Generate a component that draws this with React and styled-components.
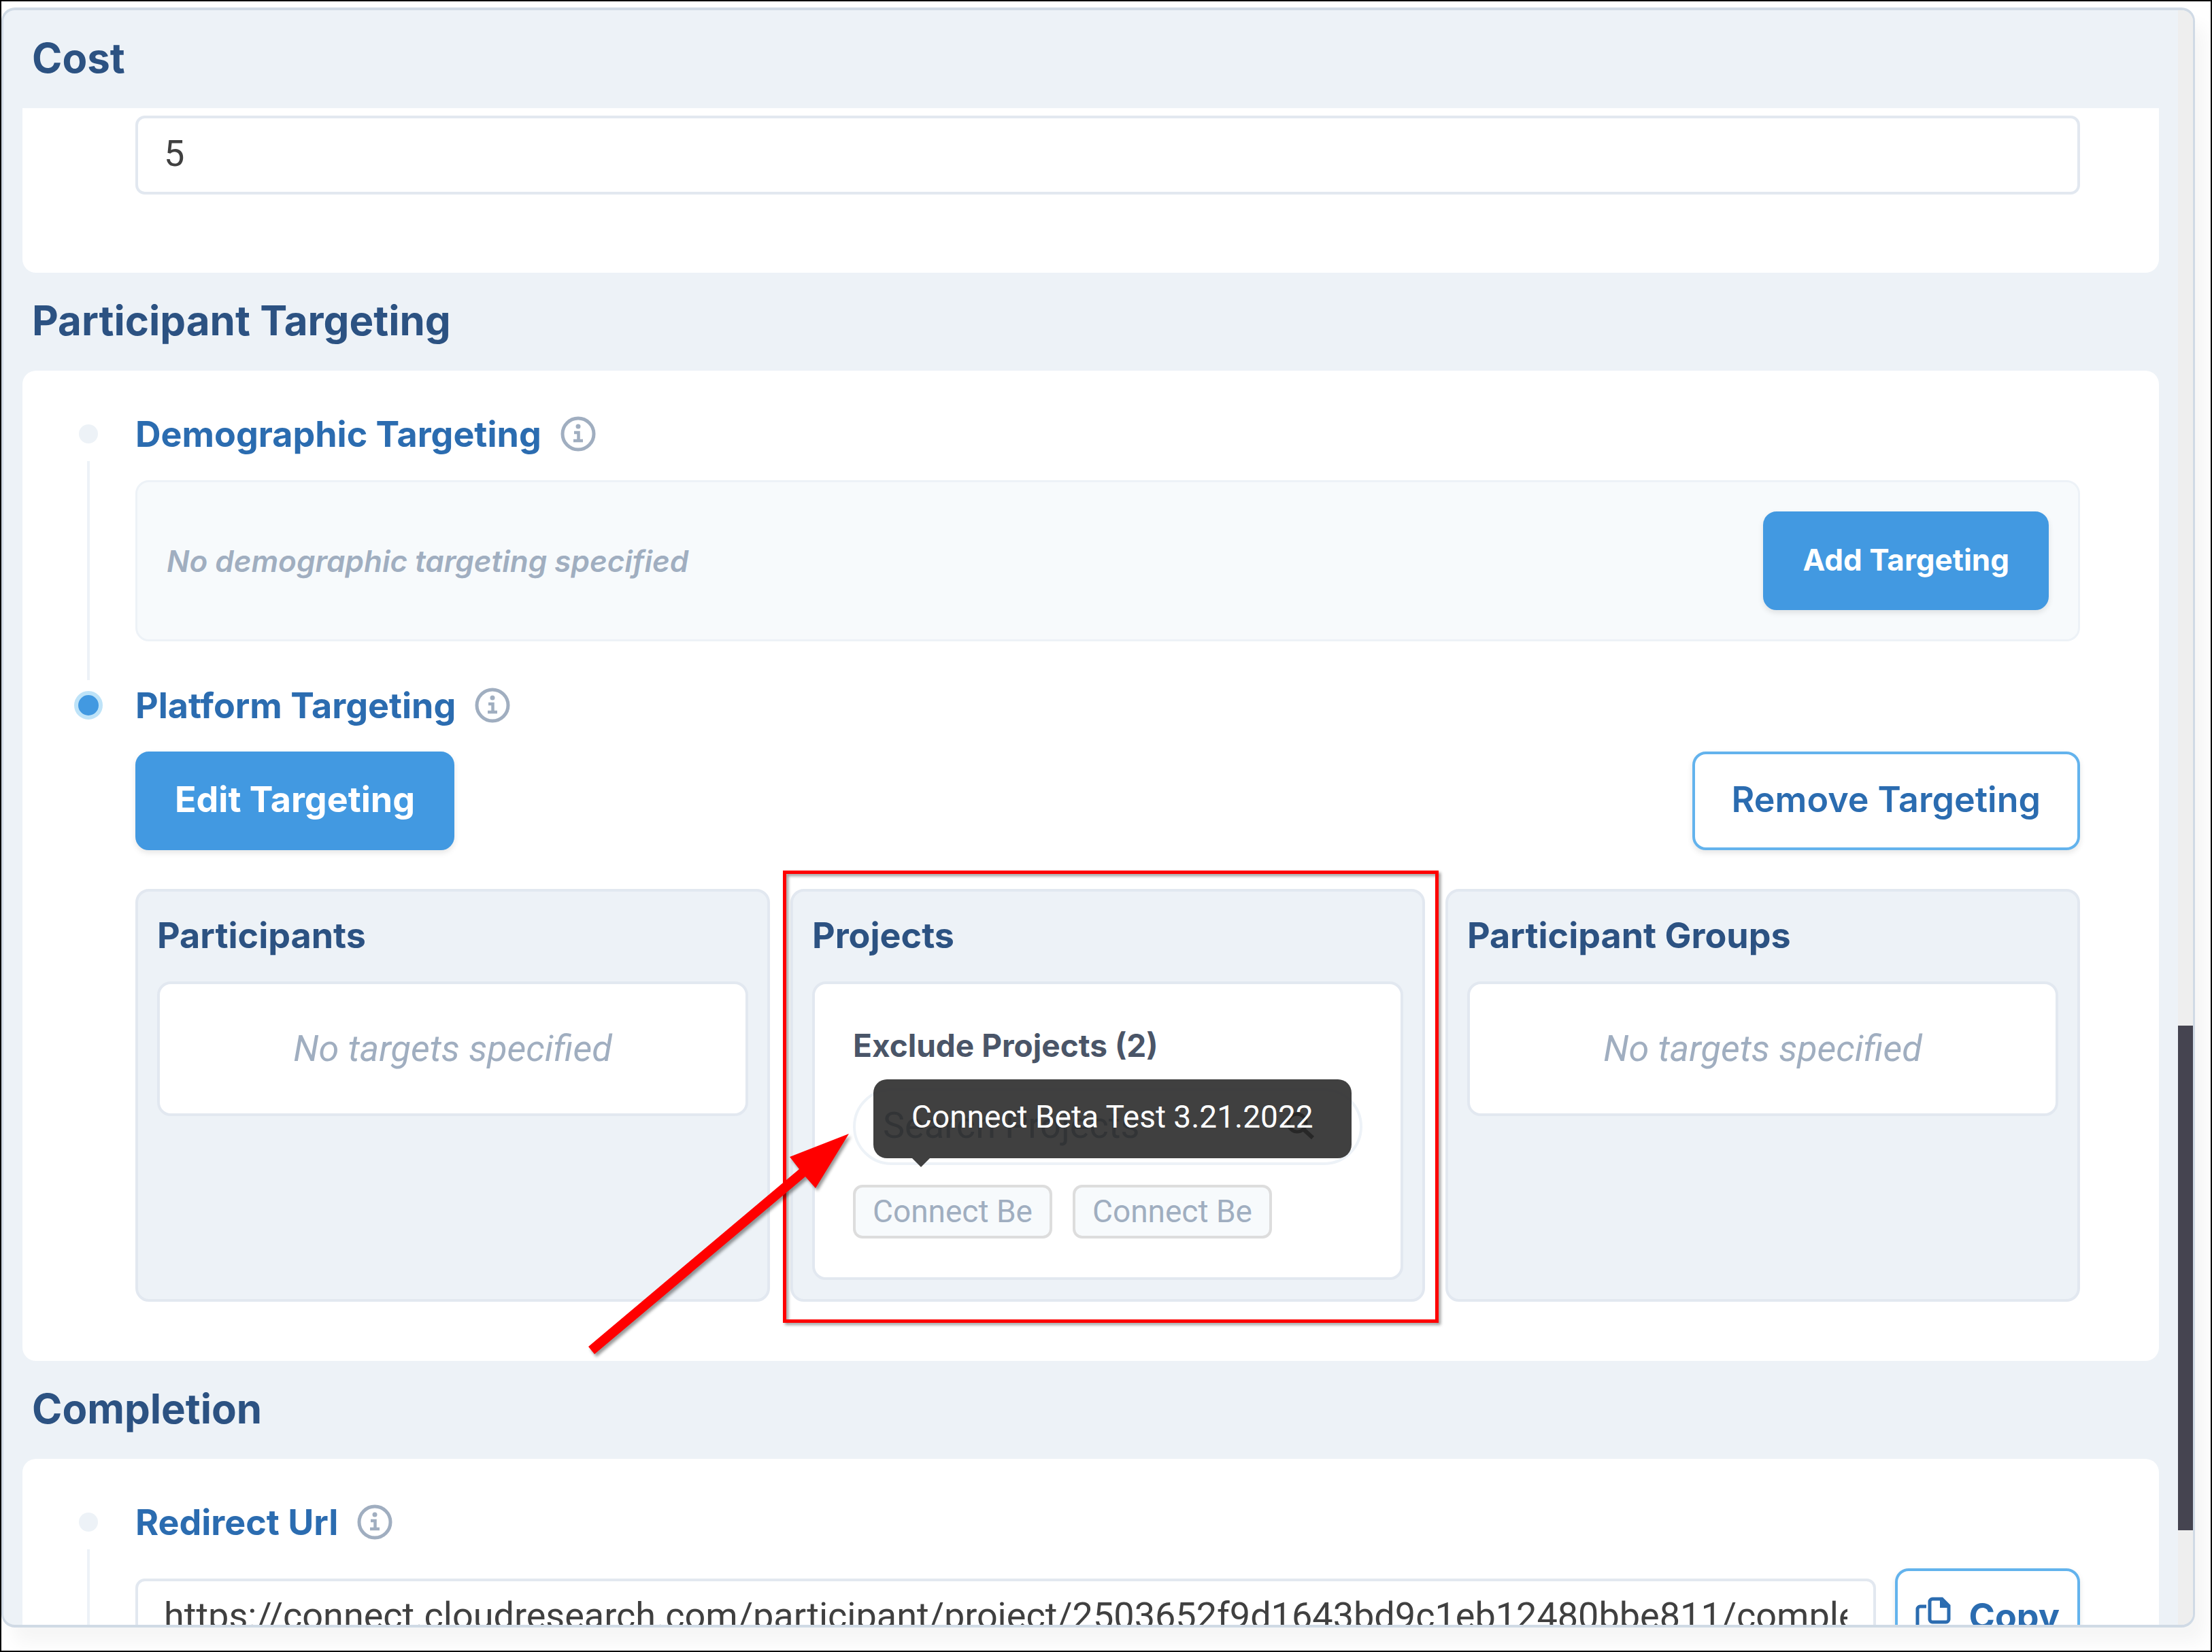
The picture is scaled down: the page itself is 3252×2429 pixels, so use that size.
import React from "react";
import styled, { createGlobalStyle, css } from "styled-components";

const App = () => {
  return (
    <Frame>
      <GlobalStyle />
      <Panel>
        <Content>
          <SectionTitle>Cost</SectionTitle>
          <CostCard>
            <TextInput aria-label="Cost" defaultValue="5" />
          </CostCard>

          <SectionTitle>Participant Targeting</SectionTitle>
          <Card>
            <Step>
              <Rail line />
              <StepBody>
                <StepHeading label="Demographic Targeting" />
                <EmptyBar>
                  <EmptyBarText>No demographic targeting specified</EmptyBarText>
                  <Button small>Add Targeting</Button>
                </EmptyBar>
              </StepBody>
            </Step>
            <Step last>
              <Rail active />
              <StepBody>
                <StepHeading label="Platform Targeting" />
                <ButtonRow>
                  <Button>Edit Targeting</Button>
                  <Button outline>Remove Targeting</Button>
                </ButtonRow>
                <Columns>
                  <Column>
                    <ColumnTitle>Participants</ColumnTitle>
                    <EmptyBox>No targets specified</EmptyBox>
                  </Column>
                  <Column>
                    <ColumnTitle>Projects</ColumnTitle>
                    <ProjectBox>
                      <ProjectTitle>Exclude Projects (2)</ProjectTitle>
                      <Search>
                        <SearchInput
                          type="text"
                          aria-label="Search Projects"
                          placeholder="Search Projects"
                        />
                        <SearchIcon />
                      </Search>
                      <Chips>
                        <Chip>
                          Connect Be
                          <Tooltip role="tooltip">
                            Connect Beta Test 3.21.2022
                          </Tooltip>
                        </Chip>
                        <Chip>Connect Be</Chip>
                      </Chips>
                    </ProjectBox>
                    <Highlight />
                    <Arrow />
                  </Column>
                  <Column>
                    <ColumnTitle>Participant Groups</ColumnTitle>
                    <EmptyBox>No targets specified</EmptyBox>
                  </Column>
                </Columns>
              </StepBody>
            </Step>
          </Card>

          <SectionTitle>Completion</SectionTitle>
          <Card>
            <Step>
              <Rail line />
              <StepBody>
                <StepHeading label="Redirect Url" />
                <UrlRow>
                  <TextInput
                    aria-label="Redirect Url"
                    readOnly
                    value="https://connect.cloudresearch.com/participant/project/2503652f9d1643bd9c1eb12480bbe811/complete"
                  />
                  <Button outline compact>
                    <CopyIcon />
                    Copy
                  </Button>
                </UrlRow>
              </StepBody>
            </Step>
          </Card>
        </Content>
        <ScrollTrack>
          <ScrollThumb />
        </ScrollTrack>
      </Panel>
    </Frame>
  );
};

const Rail = ({ active, line }) => (
  <RailColumn>
    <DotCell>
      <Dot $active={active} />
    </DotCell>
    {line ? <RailLine /> : ""}
  </RailColumn>
);

const StepHeading = ({ label }) => (
  <StepTitle>
    {label}
    <InfoIcon />
  </StepTitle>
);

const Step = ({ last, children }) => <StepRow $last={last}>{children}</StepRow>;

const Button = ({ small, outline, compact, children }) => (
  <Btn type="button" $small={small} $outline={outline} $compact={compact}>
    {children}
  </Btn>
);

const InfoIcon = () => (
  <svg width="52" height="52" viewBox="0 0 52 52" fill="none" aria-hidden="true">
    <circle cx="26" cy="26" r="23" stroke="#a0aec0" strokeWidth="5" />
    <circle cx="26" cy="15" r="3.5" fill="#a0aec0" />
    <path d="M20 24h6.500v12M19 36h14" stroke="#a0aec0" strokeWidth="4.500" />
  </svg>
);

const SearchIcon = () => (
  <svg width="44" height="44" viewBox="0 0 44 44" fill="none" aria-hidden="true">
    <circle cx="18" cy="18" r="13" stroke="#000" strokeWidth="5" />
    <path d="M28 28l13 12" stroke="#000" strokeWidth="6" />
  </svg>
);

const CopyIcon = () => (
  <svg width="52" height="60" viewBox="0 0 52 60" fill="none" aria-hidden="true">
    <path
      d="M25 4h14l10 10v20a4 4 0 0 1-4 4H25a4 4 0 0 1-4-4V8a4 4 0 0 1 4-4z"
      stroke="#2b6cb0"
      strokeWidth="5"
    />
    <path d="M36 4v13h13z" fill="#2b6cb0" />
    <path
      d="M16 15H7a4 4 0 0 0-4 4v34a4 4 0 0 0 4 4h22a4 4 0 0 0 4-4v-8"
      stroke="#2b6cb0"
      strokeWidth="5"
    />
  </svg>
);

const Arrow = () => (
  <ArrowSvg width="400" height="340" viewBox="0 0 400 340" aria-hidden="true">
    <path d="M389 7L302 41l14 18L6 320l9 11L325 70l15 17z" fill="#ff0000" />
  </ArrowSvg>
);

const GlobalStyle = createGlobalStyle`
  * {
    box-sizing: border-box;
  }

  body {
    margin: 0;
    background: #fff;
    font-family: Roboto, "Liberation Sans", sans-serif;
    font-size: 54px;
  }

  h2, h3, h4, p {
    margin: 0;
  }

  h2, h3, h4, button {
    font-family: Inter, Roboto, sans-serif;
  }
`;

const Frame = styled.div`
  display: flex;
  height: 100vh;
  padding: 9px 23px 34px 0;
  border: 2px solid #000;
  background: #fff;
`;

const Panel = styled.div`
  flex: 1;
  display: flex;
  min-width: 0;
  overflow: hidden;
  border: solid #d0dae5;
  border-width: 4px 3px;
  border-radius: 20px;
  background: #edf2f7;
  box-shadow: 16px 24px 24px rgba(0, 0, 0, 0.04);
`;

const Content = styled.main`
  flex: 1;
  min-width: 0;
  padding: 0 28px;
`;

const ScrollTrack = styled.div`
  flex: none;
  width: 22px;
  padding-top: 1493px;
  background: #eee;
`;

const ScrollThumb = styled.div`
  height: 742px;
  background: #454450;
`;

const SectionTitle = styled.h2`
  padding: 0 0 4px 14px;
  font-size: 60px;
  line-height: 140px;
  font-weight: 700;
  color: #2c5282;
`;

const Card = styled.section`
  padding: 61px 116px 87px 0;
  border-radius: 20px;
  background: #fff;
`;

const CostCard = styled(Card)`
  padding: 11px 116px 115px 166px;
  border-radius: 0 0 20px 20px;
`;

const TextInput = styled.input`
  display: block;
  width: 100%;
  min-width: 0;
  height: 116px;
  padding: 0 38px 6px;
  border: 4px solid #e2e8f0;
  border-radius: 14px;
  background: #fff;
  font: inherit;
  color: #404040;
`;

const StepRow = styled.div`
  display: grid;
  grid-template-columns: 166px minmax(0, 1fr);

  ${({ $last }) =>
    !$last &&
    css`
      > :last-child {
        padding-bottom: 62px;
      }
    `}
`;

const RailColumn = styled.div`
  display: flex;
  flex-direction: column;
  align-items: center;
  width: 42px;
  margin-left: 76px;
`;

const DotCell = styled.div`
  display: flex;
  align-items: center;
  height: 64px;
`;

const Dot = styled.span`
  width: 28px;
  height: 28px;
  border-radius: 50%;
  background: #edf2f7;

  ${({ $active }) =>
    $active &&
    css`
      width: 42px;
      height: 42px;
      border: 6px solid #bee3f8;
      background: #4299e1;
    `}
`;

const RailLine = styled.div`
  flex: 1;
  width: 4px;
  margin: 8px 0 5px;
  background: #edf2f7;
`;

const StepBody = styled.div`
  min-width: 0;
`;

const StepTitle = styled.h3`
  display: flex;
  align-items: center;
  gap: 28px;
  height: 64px;
  margin-bottom: 36px;
  font-size: 52px;
  font-weight: 700;
  color: #2b6cb0;
`;

const EmptyBar = styled.div`
  display: flex;
  align-items: center;
  justify-content: space-between;
  padding: 43px;
  border: 3px solid #edf2f7;
  border-radius: 20px;
  background: #f7fafc;
`;

const EmptyBarText = styled.p`
  font-family: Inter, Roboto, sans-serif;
  font-size: 44px;
  font-style: italic;
  font-weight: 600;
  color: #a0aec0;
`;

const Btn = styled.button`
  flex: none;
  display: flex;
  align-items: center;
  gap: 26px;
  height: 145px;
  padding: 0 54px 4px;
  border: 4px solid #4299e1;
  border-radius: 20px;
  background: #4299e1;
  box-shadow: 0 4px 8px rgba(0, 0, 0, 0.1);
  font-size: ${({ $small }) => ($small ? "44px" : "52px")};
  font-weight: 700;
  color: #fff;
  cursor: pointer;

  ${({ $outline }) =>
    $outline &&
    css`
      border-color: #63b3ed;
      background: #fff;
      font-weight: 600;
      color: #2b6cb0;
    `}

  ${({ $compact }) =>
    $compact &&
    css`
      padding: 0 26px 4px;
      font-weight: 700;
    `}
`;

const ButtonRow = styled.div`
  display: flex;
  justify-content: space-between;
  margin-bottom: 57px;
`;

const UrlRow = styled.div`
  display: flex;
  align-items: center;
  gap: 28px;
`;

const Columns = styled.div`
  display: grid;
  grid-template-columns: repeat(3, minmax(0, 1fr));
  gap: 30px;
`;

const Column = styled.section`
  position: relative;
  padding: 30px 28px 28px;
  border: 4px solid #e2e8f0;
  border-radius: 20px;
  background: #edf2f7;
`;

const ColumnTitle = styled.h4`
  margin-bottom: 32px;
  font-size: 52px;
  line-height: 70px;
  font-weight: 700;
  color: #2c5282;
`;

const EmptyBox = styled.p`
  padding: 63px 30px;
  border: 4px solid #e2e8f0;
  border-radius: 20px;
  background: #fff;
  text-align: center;
  line-height: 64px;
  font-style: italic;
  color: #a0aec0;
`;

const ProjectBox = styled.div`
  padding: 58px 56px 57px;
  border: 4px solid #e2e8f0;
  border-radius: 20px;
  background: #fff;
`;

const ProjectTitle = styled.p`
  font-family: Inter, Roboto, sans-serif;
  font-size: 46px;
  line-height: 64px;
  font-weight: 700;
  color: #4a5568;
`;

const Search = styled.div`
  display: flex;
  align-items: center;
  height: 113px;
  margin: 31px 0 29px;
  padding: 0 66px 4px 40px;
  border: 4px solid #edf2f7;
  border-radius: 57px;
`;

const SearchInput = styled.input`
  flex: 1;
  min-width: 0;
  padding: 0;
  border: none;
  background: transparent;
  font: inherit;

  &::placeholder {
    color: #718096;
  }
`;

const Chips = styled.div`
  display: flex;
  gap: 30px;
`;

const Chip = styled.span`
  position: relative;
  height: 79px;
  padding: 0 25px;
  border: 4px solid #ddd;
  border-radius: 14px;
  background: #f7fafc;
  font-size: 46px;
  line-height: 70px;
  color: #a0aec0;
`;

const Tooltip = styled.span`
  position: absolute;
  left: 26px;
  bottom: 114px;
  z-index: 1;
  padding: 0 56px 6px;
  border-radius: 20px;
  background: rgba(43, 43, 43, 0.9);
  line-height: 110px;
  white-space: nowrap;
  color: #fff;

  &::after {
    content: "";
    position: absolute;
    top: 100%;
    left: 57px;
    border: 13px solid transparent;
    border-top-color: #404040;
    border-bottom: none;
  }
`;

const Highlight = styled.div`
  position: absolute;
  inset: -31px -24px -35px -15px;
  border: 5px solid #ff0000;
  filter: drop-shadow(3px 3px 2px rgba(0, 0, 0, 0.4));
  pointer-events: none;
`;

const ArrowSvg = styled.svg`
  position: absolute;
  left: -307px;
  top: 349px;
  filter: drop-shadow(3px 4px 2px rgba(0, 0, 0, 0.4));
  pointer-events: none;
`;

export default App;
